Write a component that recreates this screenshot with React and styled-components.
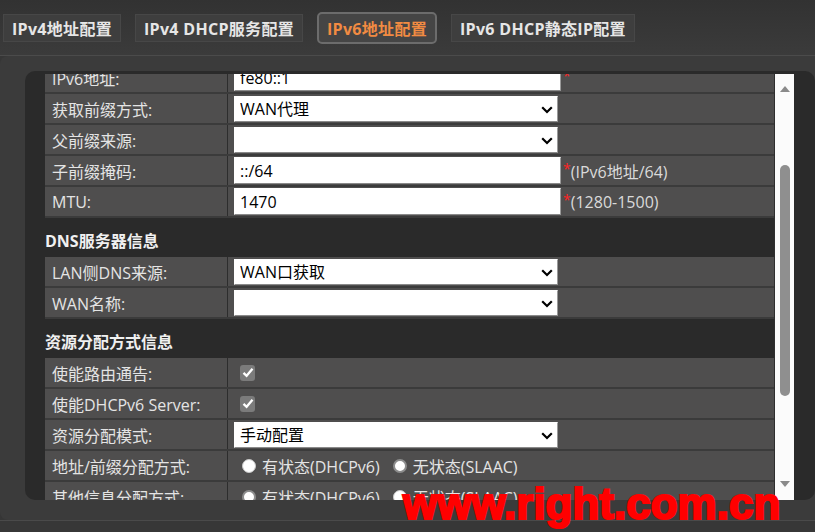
import React, { useLayoutEffect, useRef } from "react";
import styled, { createGlobalStyle, css } from "styled-components";

const Global = createGlobalStyle`
  html, body { margin: 0; padding: 0; background: #363636; overflow: hidden; }
  body { font-family: "Open Sans", "Noto Sans CJK SC", sans-serif; }
  * { box-sizing: border-box; }
`;

const Page = styled.div`
  position: relative;
  width: 815px;
  height: 532px;
  display: flex;
  flex-direction: column;
  background: #363636;
  overflow: hidden;
`;

const TabBar = styled.div`
  height: 56px;
  flex: none;
  display: flex;
  align-items: center;
  gap: 14px;
  padding-left: 3px;
  background: linear-gradient(#323232, #3b3b3b);
  border-bottom: 1px solid #4b4b4b;
`;

const Tab = styled.div`
  height: 28px;
  padding: 0 8px;
  display: flex;
  align-items: center;
  font: 700 16px "Open Sans", "Noto Sans CJK SC", sans-serif;
  letter-spacing: 0.3px;
  color: #e6e6e6;
  background: #3e3e3e;
  border: 1px solid #474747;
  white-space: nowrap;
  ${(p) =>
    p.$active &&
    css`
      height: 32px;
      border: 2px solid #6c6c6c;
      border-radius: 5px;
      color: #f28b42;
      background: #454545;
    `}
`;

const Outer = styled.div`
  flex: 1;
  min-height: 0;
  display: flex;
  padding: 15px 0 20px 25px;
  background: #3b3b3b;
  border-radius: 8px 0 0 8px;
`;

const Footer = styled.div`
  height: 12px;
  flex: none;
  background: #373737;
  border-top: 1px solid #4a4a4a;
`;

const Inner = styled.div`
  flex: 1;
  min-width: 0;
  display: flex;
  background: #2a2a2a;
  border-radius: 10px;
  padding: 3px 21px 0 20px;
`;

const Viewport = styled.div`
  flex: 1;
  min-width: 0;
  overflow: hidden;
`;

const Scrollbar = styled.div`
  width: 20px;
  flex: none;
  display: flex;
  flex-direction: column;
  align-items: center;
  background: #fbfbfb;
  border-left: 1px solid #2e2e2e;
`;

const ArrowUp = styled.div`
  width: 0;
  height: 0;
  margin-top: 12px;
  border-left: 5.5px solid transparent;
  border-right: 5.5px solid transparent;
  border-bottom: 6px solid #8a8a8a;
`;

const ArrowDown = styled.div`
  width: 0;
  height: 0;
  margin-bottom: 13px;
  border-left: 5.5px solid transparent;
  border-right: 5.5px solid transparent;
  border-top: 6px solid #8a8a8a;
`;

const Thumb = styled.div`
  width: 10px;
  height: 231px;
  margin-top: 73px;
  border-radius: 5px;
  background: #8f8f8f;
`;

const Spacer = styled.div`
  flex: 1;
`;

const SectionTitle = styled.div`
  height: 39px;
  padding-top: 13px;
  line-height: 20px;
  font-size: 16px;
  font-weight: 700;
  color: #f0f0f0;
  white-space: nowrap;
`;

const Row = styled.div`
  display: flex;
  height: 31px;
  border-bottom: 2px solid #3b3b3b;
  background: #4f4e4e;
  color: #e4e4e4;
  font-size: 16px;
`;

const Label = styled.div`
  width: 183px;
  flex: none;
  display: flex;
  align-items: center;
  padding-left: 7px;
  border-right: 1px solid #2d2d2d;
  white-space: nowrap;
  overflow: hidden;
`;

const Value = styled.div`
  flex: 1;
  display: flex;
  align-items: center;
  padding-left: 6px;
  white-space: nowrap;
`;

const TextInput = styled.input`
  width: 327px;
  height: 27px;
  padding: 0 5px;
  border: 1px solid;
  border-color: #fff #9a9a9a #8a8a8a #fff;
  background: #fff;
  color: #000;
  font: 400 16px "Open Sans", "Noto Sans CJK SC", sans-serif;
  outline: none;
`;

const SelectWrap = styled.div`
  position: relative;
  width: 324px;
  height: 26px;
`;

const Select = styled.select`
  appearance: none;
  width: 100%;
  height: 100%;
  padding: 0 5px;
  border: 1px solid;
  border-color: #fff #9a9a9a #8a8a8a #fff;
  border-radius: 0;
  background: #fff;
  color: #000;
  font: 400 16px "Open Sans", "Noto Sans CJK SC", sans-serif;
  outline: none;
`;

const Chevron = styled.svg`
  position: absolute;
  right: 5px;
  top: 10px;
  pointer-events: none;
`;

const Star = styled.span`
  color: #ff2323;
  margin-left: 2px;
  align-self: flex-start;
  margin-top: 3px;
  font-size: 14px;
`;

const Note = styled.span`
  color: #dadada;
  font-size: 16px;
`;

const Check = styled.span`
  width: 15px;
  height: 16px;
  margin-left: 6px;
  border-radius: 3px;
  background: #7b7b7b;
  display: flex;
  align-items: center;
  justify-content: center;
`;

const RadioItem = styled.label`
  display: flex;
  align-items: center;
  gap: 6px;
  margin-left: ${(p) => (p.$first ? "8px" : "13px")};
  color: #e4e4e4;
`;

const Radio = styled.span`
  width: 14px;
  height: 14px;
  border-radius: 50%;
  background: #fff;
  border: ${(p) => (p.$ring ? "2.5px solid #8c8c8c" : "1px solid #c8c8c8")};
`;

const Watermark = styled.div`
  position: absolute;
  left: 403px;
  top: 482px;
  font: 700 44px/1 "Liberation Sans", Arial, sans-serif;
  color: #ff0000;
  -webkit-text-stroke: 2.2px #ff0000;
  white-space: nowrap;
  pointer-events: none;
`;

function SelectBox({ value }) {
  return (
    <SelectWrap>
      <Select value={value} onChange={() => {}}>
        <option value={value}>{value}</option>
      </Select>
      <Chevron width="12" height="8" viewBox="0 0 12 8">
        <path d="M1.2 1.2 L6 6 L10.8 1.2" fill="none" stroke="#000" strokeWidth="2.2" />
      </Chevron>
    </SelectWrap>
  );
}

function CheckBox() {
  return (
    <Check>
      <svg width="12" height="11" viewBox="0 0 12 11">
        <path d="M1.5 5.8 L4.6 8.8 L10.5 1.8" fill="none" stroke="#fff" strokeWidth="2.3" />
      </svg>
    </Check>
  );
}

function RadioPair({ firstRing }) {
  return (
    <>
      <RadioItem $first>
        <Radio $ring={firstRing} />
        有状态(DHCPv6)
      </RadioItem>
      <RadioItem>
        <Radio $ring={!firstRing} />
        无状态(SLAAC)
      </RadioItem>
    </>
  );
}

const tabs = ["IPv4地址配置", "IPv4 DHCP服务配置", "IPv6地址配置", "IPv6 DHCP静态IP配置"];

export default function App() {
  const vp = useRef(null);
  useLayoutEffect(() => {
    if (vp.current) vp.current.scrollTop = 50;
  }, []);

  return (
    <Page>
      <Global />
      <TabBar>
        {tabs.map((t, i) => (
          <Tab key={t} $active={i === 2}>
            {t}
          </Tab>
        ))}
      </TabBar>
      <Outer>
        <Inner>
          <Viewport ref={vp}>
            <SectionTitle>IPv6地址信息</SectionTitle>
            <Row>
              <Label>IPv6地址:</Label>
              <Value>
                <TextInput readOnly value="fe80::1" />
                <Star>*</Star>
              </Value>
            </Row>
            <Row>
              <Label>获取前缀方式:</Label>
              <Value>
                <SelectBox value="WAN代理" />
              </Value>
            </Row>
            <Row>
              <Label>父前缀来源:</Label>
              <Value>
                <SelectBox value="" />
              </Value>
            </Row>
            <Row>
              <Label>子前缀掩码:</Label>
              <Value>
                <TextInput readOnly value="::/64" />
                <Star>*</Star>
                <Note>(IPv6地址/64)</Note>
              </Value>
            </Row>
            <Row>
              <Label>MTU:</Label>
              <Value>
                <TextInput readOnly value="1470" />
                <Star>*</Star>
                <Note>(1280-1500)</Note>
              </Value>
            </Row>

            <SectionTitle>DNS服务器信息</SectionTitle>
            <Row>
              <Label>LAN侧DNS来源:</Label>
              <Value>
                <SelectBox value="WAN口获取" />
              </Value>
            </Row>
            <Row>
              <Label>WAN名称:</Label>
              <Value>
                <SelectBox value="" />
              </Value>
            </Row>

            <SectionTitle>资源分配方式信息</SectionTitle>
            <Row>
              <Label>使能路由通告:</Label>
              <Value>
                <CheckBox />
              </Value>
            </Row>
            <Row>
              <Label>使能DHCPv6 Server:</Label>
              <Value>
                <CheckBox />
              </Value>
            </Row>
            <Row>
              <Label>资源分配模式:</Label>
              <Value>
                <SelectBox value="手动配置" />
              </Value>
            </Row>
            <Row>
              <Label>地址/前缀分配方式:</Label>
              <Value>
                <RadioPair firstRing={false} />
              </Value>
            </Row>
            <Row>
              <Label>其他信息分配方式:</Label>
              <Value>
                <RadioPair firstRing={true} />
              </Value>
            </Row>
            <Row>
              <Label>DNS分配方式:</Label>
              <Value>
                <RadioPair firstRing={false} />
              </Value>
            </Row>
          </Viewport>
          <Scrollbar>
            <ArrowUp />
            <Thumb />
            <Spacer />
            <ArrowDown />
          </Scrollbar>
        </Inner>
      </Outer>
      <Footer />
      <Watermark>www.right.com.cn</Watermark>
    </Page>
  );
}
